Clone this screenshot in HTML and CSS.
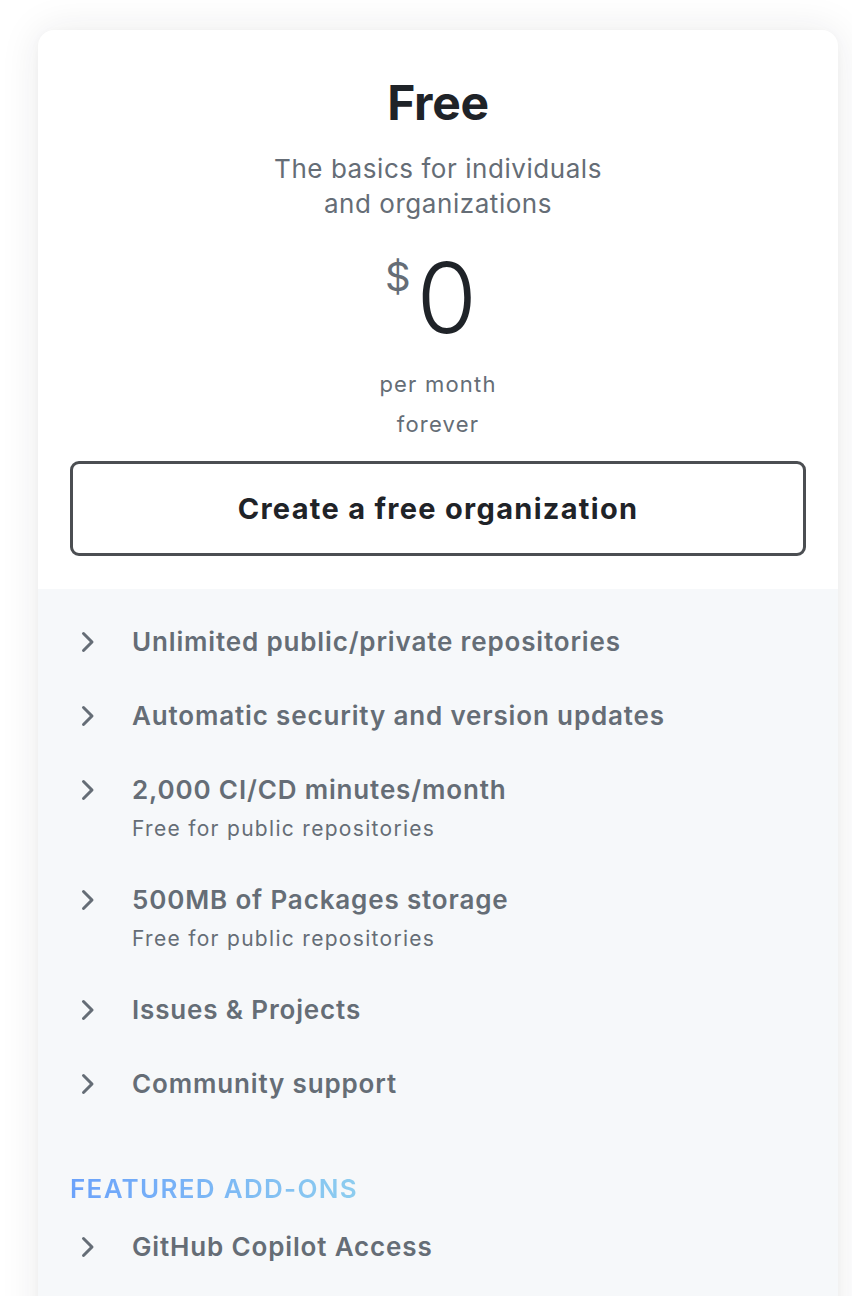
FILE: index.html
```html
<!DOCTYPE html>
<html lang="en">
<head>
<meta charset="utf-8">
<title>Free plan</title>
<link rel="stylesheet" href="styles.css">
</head>
<body>
<div class="card">
  <div class="top">
    <h2 class="plan">Free</h2>
    <p class="desc">The basics for individuals<br>and organizations</p>
    <div class="price"><span class="cur">$</span><span class="amt">0</span></div>
    <p class="period">per month</p>
    <p class="period">forever</p>
    <a class="btn" href="#">Create a free organization</a>
  </div>
  <div class="features">
    <ul class="list">
      <li class="item"><svg class="chev" viewBox="0 0 16 16"><path d="M6.22 3.22a.75.75 0 0 1 1.06 0l4.25 4.25a.75.75 0 0 1 0 1.06l-4.25 4.25a.75.75 0 0 1-1.06-1.06L9.94 8 6.22 4.28a.75.75 0 0 1 0-1.06Z"/></svg><div class="txt"><div class="ttl">Unlimited public/private repositories</div></div></li>
      <li class="item"><svg class="chev" viewBox="0 0 16 16"><path d="M6.22 3.22a.75.75 0 0 1 1.06 0l4.25 4.25a.75.75 0 0 1 0 1.06l-4.25 4.25a.75.75 0 0 1-1.06-1.06L9.94 8 6.22 4.28a.75.75 0 0 1 0-1.06Z"/></svg><div class="txt"><div class="ttl">Automatic security and version updates</div></div></li>
      <li class="item"><svg class="chev" viewBox="0 0 16 16"><path d="M6.22 3.22a.75.75 0 0 1 1.06 0l4.25 4.25a.75.75 0 0 1 0 1.06l-4.25 4.25a.75.75 0 0 1-1.06-1.06L9.94 8 6.22 4.28a.75.75 0 0 1 0-1.06Z"/></svg><div class="txt"><div class="ttl">2,000 CI/CD minutes/month</div><div class="sub">Free for public repositories</div></div></li>
      <li class="item"><svg class="chev" viewBox="0 0 16 16"><path d="M6.22 3.22a.75.75 0 0 1 1.06 0l4.25 4.25a.75.75 0 0 1 0 1.06l-4.25 4.25a.75.75 0 0 1-1.06-1.06L9.94 8 6.22 4.28a.75.75 0 0 1 0-1.06Z"/></svg><div class="txt"><div class="ttl">500MB of Packages storage</div><div class="sub">Free for public repositories</div></div></li>
      <li class="item"><svg class="chev" viewBox="0 0 16 16"><path d="M6.22 3.22a.75.75 0 0 1 1.06 0l4.25 4.25a.75.75 0 0 1 0 1.06l-4.25 4.25a.75.75 0 0 1-1.06-1.06L9.94 8 6.22 4.28a.75.75 0 0 1 0-1.06Z"/></svg><div class="txt"><div class="ttl">Issues &amp; Projects</div></div></li>
      <li class="item"><svg class="chev" viewBox="0 0 16 16"><path d="M6.22 3.22a.75.75 0 0 1 1.06 0l4.25 4.25a.75.75 0 0 1 0 1.06l-4.25 4.25a.75.75 0 0 1-1.06-1.06L9.94 8 6.22 4.28a.75.75 0 0 1 0-1.06Z"/></svg><div class="txt"><div class="ttl">Community support</div></div></li>
    </ul>
    <h3 class="addons"><span class="grad">FEATURED ADD-ONS</span></h3>
    <ul class="list">
      <li class="item"><svg class="chev" viewBox="0 0 16 16"><path d="M6.22 3.22a.75.75 0 0 1 1.06 0l4.25 4.25a.75.75 0 0 1 0 1.06l-4.25 4.25a.75.75 0 0 1-1.06-1.06L9.94 8 6.22 4.28a.75.75 0 0 1 0-1.06Z"/></svg><div class="txt"><div class="ttl">GitHub Copilot Access</div></div></li>
    </ul>
  </div>
</div>
</body>
</html>
```

FILE: styles.css
```css
* { box-sizing: border-box; }
html, body { margin: 0; padding: 0; background: #ffffff; }
body {
  font-family: Inter, "Noto Sans", "Liberation Sans", sans-serif;
  color: #1f2328;
  height: 1296px;
  overflow: hidden;
}
.card {
  width: 800px;
  margin: 30px 0 0 38px;
  border-radius: 16px;
  background: #ffffff;
  box-shadow: 0 0 40px rgba(31, 35, 40, 0.09), 0 2px 10px rgba(31, 35, 40, 0.03);
  overflow: hidden;
  min-height: 1400px;
  display: flex;
  flex-direction: column;
}
.top {
  padding: 43px 32px 33px;
  text-align: center;
  display: flex;
  flex-direction: column;
  align-items: center;
}
.plan {
  margin: 0;
  font-size: 48px;
  line-height: 60px;
  font-weight: 700;
  color: #1f2328;
  letter-spacing: -0.3px;
}
.desc {
  margin: 18px 0 0;
  font-size: 26px;
  line-height: 35px;
  color: #656d76;
  letter-spacing: 0.55px;
}
.price {
  margin-top: 29px;
  display: flex;
  align-items: flex-start;
  justify-content: center;
  height: 96px;
  padding-right: 14px;
}
.cur {
  font-size: 40px;
  line-height: 1;
  color: #656d76;
  margin-top: 7px;
  margin-right: 6px;
}
.amt {
  font-size: 98px;
  line-height: 96px;
  font-weight: 300;
  color: #1f2328;
}
.period {
  margin: 0;
  font-size: 22px;
  line-height: 40px;
  color: #656d76;
  letter-spacing: 1.2px;
}
.price + .period { margin-top: 18px; }
.btn {
  margin-top: 17px;
  align-self: stretch;
  height: 95px;
  border: 3px solid #4b4e52;
  border-radius: 9px;
  display: flex;
  align-items: center;
  justify-content: center;
  font-size: 29px;
  font-weight: 700;
  color: #1f2328;
  text-decoration: none;
  letter-spacing: 1.3px;
}
.features {
  flex: 1;
  background: #f6f8fa;
  padding: 35px 32px 32px;
}
.list {
  list-style: none;
  margin: 0;
  padding: 0;
  display: flex;
  flex-direction: column;
  gap: 38px;
}
.item {
  display: flex;
  align-items: flex-start;
  gap: 30px;
}
.chev {
  width: 32px;
  height: 32px;
  margin-top: 2px;
  fill: #656d76;
  flex: none;
}
.ttl {
  font-size: 26px;
  line-height: 36px;
  font-weight: 600;
  color: #656d76;
  letter-spacing: 0.85px;
}
.sub {
  margin-top: 6px;
  font-size: 21px;
  line-height: 30px;
  color: #656d76;
  letter-spacing: 1.3px;
}
.addons {
  margin: 71px 0 24px;
  font-size: 26px;
  line-height: 32px;
  font-weight: 600;
  letter-spacing: 1.3px;
}
.grad {
  background: linear-gradient(90deg, #6ba2fb 0%, #8dcdef 100%);
  -webkit-background-clip: text;
  background-clip: text;
  color: transparent;
}
```
